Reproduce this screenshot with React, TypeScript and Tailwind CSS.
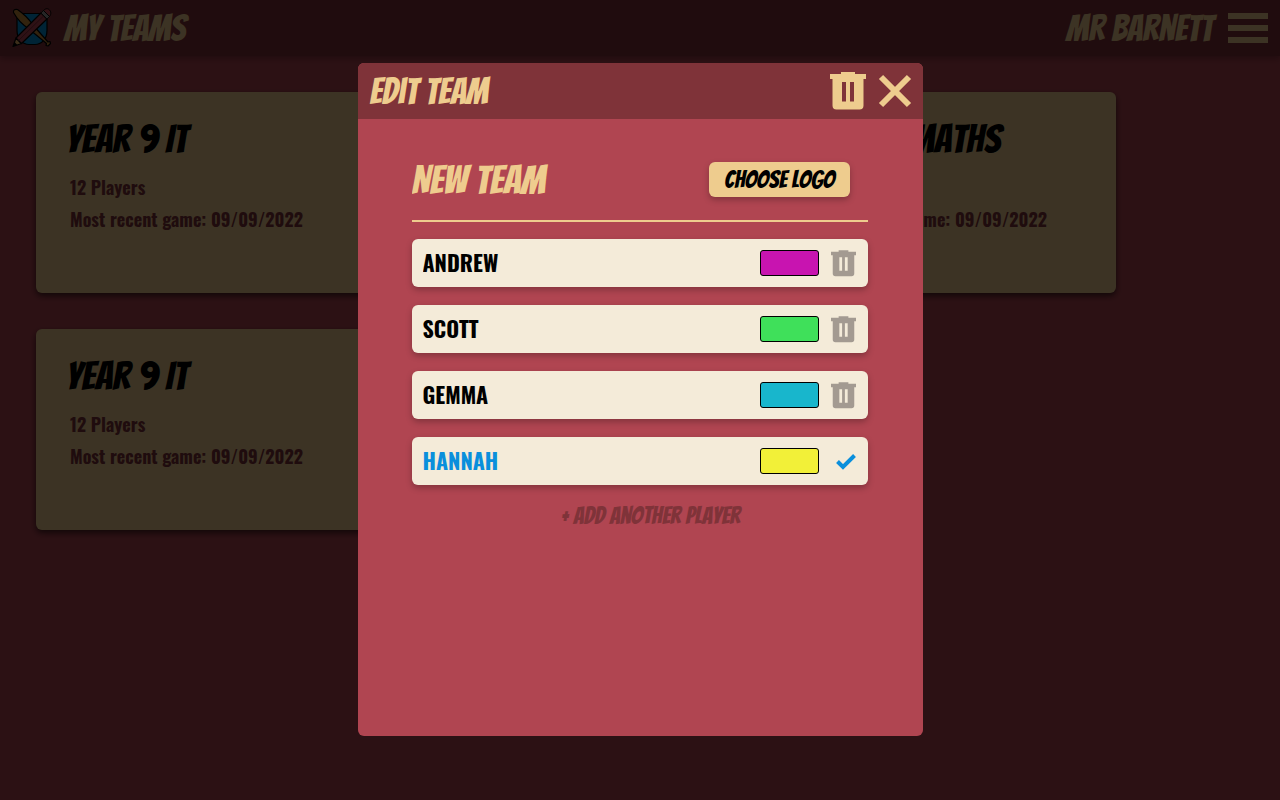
import { useState } from "react";

type Team = { id: number; name: string; players: number; lastGame: string };
type Player = { id: number; name: string; color: string; editing?: boolean };

const TEAMS: Team[] = [
  { id: 1, name: "Year 9 IT", players: 12, lastGame: "09/09/2022" },
  { id: 2, name: "Year 9 IT", players: 12, lastGame: "09/09/2022" },
  { id: 3, name: "Year 9 Maths", players: 12, lastGame: "09/09/2022" },
  { id: 4, name: "Year 9 IT", players: 12, lastGame: "09/09/2022" },
];

const PLAYERS: Player[] = [
  { id: 1, name: "ANDREW", color: "#c814b0" },
  { id: 2, name: "SCOTT", color: "#3fe05a" },
  { id: 3, name: "GEMMA", color: "#18b6cc" },
  { id: 4, name: "HANNAH", color: "#f2f038", editing: true },
];

function Logo() {
  return (
    <svg viewBox="0 0 40 40" className="size-10" aria-hidden="true">
      <path d="M5 5.500h30v17c0 9-6 14-12 14h-6c-6 0-12-5-12-14Z" fill="#0091d6" stroke="#000" strokeWidth="1.2" />
      <path d="M1.500 4.500C1 2 3 .8 5.500 1.500 12 6 17 11 21 17l15 17 2-.5.5 2-2.500 2.500-2-.5.5-2L17 21C11 17 5 11 1.500 4.500Z" fill="#c88a3a" stroke="#000" strokeWidth="1.200" strokeLinejoin="round" />
      <path d="M1 38.500 4 30l5.500 5.500Z" fill="#eeb868" stroke="#000" strokeWidth="1.200" strokeLinejoin="round" />
      <path d="m1 38.500 1.600-4.400 2.800 2.800Z" fill="#000" />
      <path d="M4 30 29 5l6 6L9.500 35.500Z" fill="#b84453" stroke="#000" strokeWidth="1.200" strokeLinejoin="round" />
      <path d="m6.500 32.500 25.500-25" stroke="#7d2c38" strokeWidth="1" />
      <path d="m29 5 2.500-2.500 6 6L35 11Z" fill="#999" stroke="#000" strokeWidth=".8" />
      <path d="M31.500 2.500C34 0 36 .5 37.500 2s2 4 0 6.500Z" fill="#c84454" stroke="#000" strokeWidth="1" />
    </svg>
  );
}

function TrashIcon({ className }: { className: string }) {
  return (
    <svg viewBox="0 0 36 38" fill="currentColor" fillRule="evenodd" className={className} aria-hidden="true">
      <path d="M11 0h14v2h11v5h-2.500v26.500q0 4-4 4h-23q-4 0-4-4V7H0V2h11ZM12 10v19.500h4V10ZM20 10v19.500h4V10Z" />
    </svg>
  );
}

function TeamCard({ team }: { team: Team }) {
  return (
    <article className="h-[201px] rounded-md bg-[#eecc8e] pt-[23px] pr-8 pl-[30px] shadow-[0_3px_6px_rgba(0,0,0,0.6)]">
      <h2 className="font-['Bangers',cursive] text-[40px] leading-[48px] text-black">{team.name}</h2>
      <div className="px-1 pt-2 font-['Oswald',sans-serif] text-lg leading-8 font-bold text-[#7d3238]">
        <p>{team.players} Players</p>
        <p>Most recent game: {team.lastGame}</p>
      </div>
    </article>
  );
}

function PlayerRow({ player }: { player: Player }) {
  const [name, setName] = useState(player.name);
  const [color, setColor] = useState(player.color);
  return (
    <li className="flex h-12 items-center rounded-md bg-[#f4ebd9] pr-3 pl-[11px] shadow-[0_3px_6px_rgba(0,0,0,0.25)]">
      <input
        aria-label="Player name"
        value={name}
        onChange={(e) => setName(e.target.value)}
        className={
          player.editing
            ? "h-full min-w-0 flex-1 bg-transparent pb-0.5 font-['Oswald',sans-serif] text-[22px] font-bold text-[#0a8fdc] outline-none"
            : "h-full min-w-0 flex-1 bg-transparent pb-0.5 font-['Oswald',sans-serif] text-[22px] font-bold text-black outline-none"
        }
      />
      <input
        type="color"
        aria-label={`Colour for ${name}`}
        value={color}
        onChange={(e) => setColor(e.target.value)}
        className="h-[26px] w-[59px] cursor-pointer appearance-none p-0 [&::-webkit-color-swatch-wrapper]:p-0 [&::-webkit-color-swatch]:rounded-[3px] [&::-webkit-color-swatch]:border [&::-webkit-color-swatch]:border-solid [&::-webkit-color-swatch]:border-black"
      />
      {player.editing ? (
        <button type="button" aria-label={`Save ${name}`} className="ml-3 flex w-[25px] justify-end text-[#0a8fdc]">
          <svg viewBox="0 0 20 18" className="h-[18px] w-5" fill="none" stroke="currentColor" strokeWidth="4" aria-hidden="true">
            <path d="m1.500 9.500 5.500 5.500L18.500 3.500" />
          </svg>
        </button>
      ) : (
        <button type="button" aria-label={`Remove ${name}`} className="ml-3 text-[#a39a91]">
          <TrashIcon className="h-[27px] w-[25px]" />
        </button>
      )}
    </li>
  );
}

function EditTeamDialog() {
  const [teamName, setTeamName] = useState("New Team");
  return (
    <section role="dialog" aria-modal="true" aria-labelledby="edit-title" className="flex w-[565px] max-w-full flex-col overflow-hidden rounded-md bg-[#b04551]">
      <header className="flex h-14 shrink-0 items-center justify-between bg-[#7f3339] pr-[11px] pl-3 text-[#eecc8e]">
        <h2 id="edit-title" className="pt-0.5 font-['Bangers',cursive] text-4xl">Edit Team</h2>
        <div className="flex items-center gap-3">
          <button type="button" aria-label="Delete team">
            <TrashIcon className="h-[38px] w-9" />
          </button>
          <button type="button" aria-label="Close">
            <svg viewBox="0 0 34 34" className="size-[34px]" fill="none" stroke="currentColor" strokeWidth="6" aria-hidden="true">
              <path d="m3 3 28 28M31 3 3 31" />
            </svg>
          </button>
        </div>
      </header>
      <div className="flex flex-col pt-9 pr-[55px] pl-[54px]">
        <div className="flex h-[67px] items-start justify-between border-b-2 border-[#eecc8e] pr-[18px]">
          <input
            aria-label="Team name"
            value={teamName}
            onChange={(e) => setTeamName(e.target.value)}
            className="h-[50px] w-60 min-w-0 bg-transparent font-['Bangers',cursive] text-[40px] text-[#eecc8e] outline-none"
          />
          <button type="button" className="mt-[7px] h-[35px] rounded-md bg-[#eecc8e] px-[15px] font-['Bangers',cursive] text-2xl text-black shadow-[0_3px_6px_rgba(0,0,0,0.25)]">
            Choose Logo
          </button>
        </div>
        <ul className="flex flex-col gap-[18px] pt-[17px]">
          {PLAYERS.map((player) => (
            <PlayerRow key={player.id} player={player} />
          ))}
        </ul>
        <button type="button" className="mt-[13px] self-center pl-[22px] font-['Bangers',cursive] text-2xl leading-9 text-[#7f3339]">
          + Add another player
        </button>
      </div>
    </section>
  );
}

export default function App() {
  return (
    <div className="min-h-screen bg-[#b04551]">
      <header className="flex h-14 items-center justify-between bg-[#7f3339] px-3 font-['Bangers',cursive] text-4xl text-[#eecc8e] shadow-[0_3px_6px_rgba(0,0,0,0.25)]">
        <div className="flex items-center gap-3">
          <Logo />
          <h1 className="pt-0.5">My Teams</h1>
        </div>
        <div className="flex items-center gap-[15px]">
          <span className="pt-0.5">Mr Barnett</span>
          <button type="button" aria-label="Menu" className="flex w-10 flex-col gap-1.5">
            <span className="h-1.5 w-full bg-current" />
            <span className="h-1.5 w-full bg-current" />
            <span className="h-1.5 w-full bg-current" />
          </button>
        </div>
      </header>
      <main className="flex flex-wrap gap-9 p-9">
        {TEAMS.map((team) => (
          <div key={team.id} className="w-[336px]">
            <TeamCard team={team} />
          </div>
        ))}
      </main>
      <div className="fixed inset-0 flex justify-center bg-black/75 pt-[63px] pb-16">
        <EditTeamDialog />
      </div>
    </div>
  );
}
